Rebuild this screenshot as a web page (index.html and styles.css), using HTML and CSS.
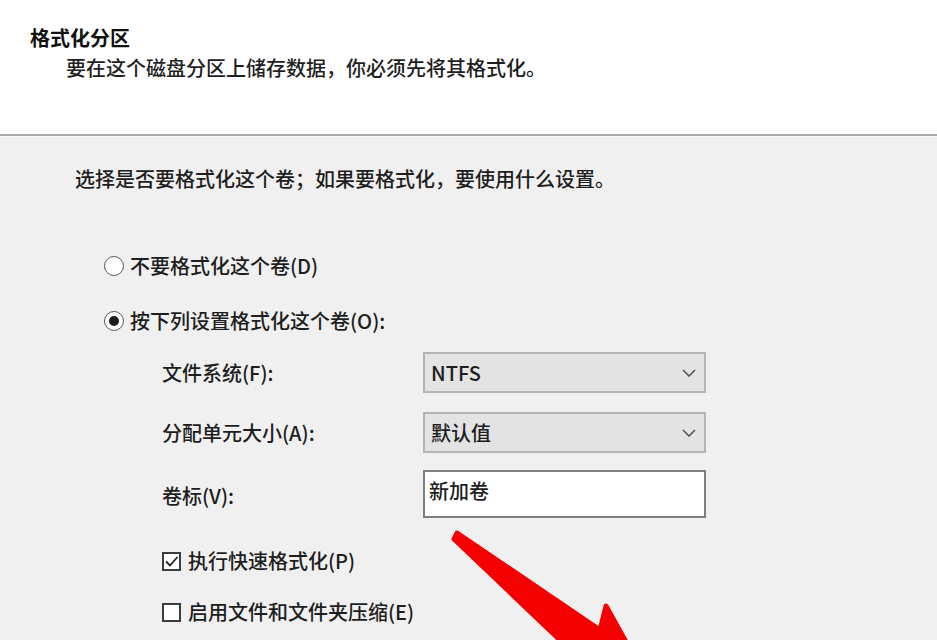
FILE: index.html
```html
<!DOCTYPE html>
<html lang="zh-CN">
<head>
<meta charset="utf-8">
<title>格式化分区</title>
<link rel="stylesheet" href="styles.css">
</head>
<body>
<div class="page">
  <header class="header">
    <div class="title">格式化分区</div>
    <div class="subtitle">要在这个磁盘分区上储存数据，你必须先将其格式化。</div>
  </header>
  <div class="sep"></div>
  <main class="main">
    <p class="intro">选择是否要格式化这个卷；如果要格式化，要使用什么设置。</p>
    <div class="options">
      <div class="radio-row"><span class="radio"></span><span>不要格式化这个卷(D)</span></div>
      <div class="radio-row"><span class="radio checked"></span><span>按下列设置格式化这个卷(O):</span></div>
    </div>
    <div class="form">
      <div class="label">文件系统(F):</div>
      <div class="select"><span>NTFS</span>
        <svg class="chev" width="14" height="8" viewBox="0 0 14 8"><polyline points="1,1 7,7 13,1" fill="none" stroke="#555" stroke-width="1.6"/></svg>
      </div>
      <div class="label">分配单元大小(A):</div>
      <div class="select"><span>默认值</span>
        <svg class="chev" width="14" height="8" viewBox="0 0 14 8"><polyline points="1,1 7,7 13,1" fill="none" stroke="#555" stroke-width="1.6"/></svg>
      </div>
      <div class="label">卷标(V):</div>
      <div class="input">新加卷</div>
    </div>
    <div class="checks">
      <div class="check-row"><span class="box"><svg width="15" height="15" viewBox="0 0 15 15"><polyline points="2,7.5 6,11.5 13.5,3" fill="none" stroke="#222" stroke-width="1.8"/></svg></span><span>执行快速格式化(P)</span></div>
      <div class="check-row"><span class="box"></span><span>启用文件和文件夹压缩(E)</span></div>
    </div>
  </main>
  <svg class="arrow" width="937" height="640" viewBox="0 0 937 640">
    <path d="M457,533 L600,630 L606,606 L626,642 L562,642 L454,539 Z" fill="#f40000" stroke="#f40000" stroke-width="5" stroke-linejoin="round"/>
  </svg>
</div>
</body>
</html>
```

FILE: styles.css
```css
html, body {
  margin: 0;
  padding: 0;
}
body {
  width: 937px;
  height: 640px;
  overflow: hidden;
  background: #f0f0f0;
  font-family: "Noto Sans CJK SC", "Microsoft YaHei", sans-serif;
  font-size: 20px;
  font-weight: 500;
  color: #1e1e1e;
}
.page {
  position: relative;
  width: 937px;
  height: 640px;
  overflow: hidden;
}
.header {
  background: #ffffff;
  height: 134px;
  box-sizing: border-box;
  padding-top: 26px;
}
.title {
  margin-left: 30px;
  font-weight: bold;
  line-height: 24px;
  color: #111;
}
.subtitle {
  margin-left: 66px;
  margin-top: 6px;
  line-height: 24px;
}
.sep {
  height: 2px;
  background: #a8a8a8;
  border-bottom: 1px solid #fbfbfb;
}
.main {
  padding-top: 30px;
}
.intro {
  margin: 0 0 0 75px;
  line-height: 24px;
}
.options {
  margin-left: 104px;
  margin-top: 63px;
  display: flex;
  flex-direction: column;
  gap: 31px;
}
.radio-row {
  display: flex;
  align-items: center;
  gap: 6px;
  line-height: 24px;
}
.radio {
  width: 20px;
  height: 20px;
  box-sizing: border-box;
  border: 1.5px solid #5a5a5a;
  border-radius: 50%;
  background: #fff;
  position: relative;
  flex: none;
}
.radio.checked::after {
  content: "";
  position: absolute;
  left: 3.5px;
  top: 3.5px;
  width: 10px;
  height: 10px;
  border-radius: 50%;
  background: #1c1c1c;
}
.form {
  margin-left: 162px;
  margin-top: 19px;
  display: grid;
  grid-template-columns: 261px 283px;
  grid-template-rows: 41px 41px 48px;
  row-gap: 19px;
  align-items: center;
}
.label {
  line-height: 24px;
}
.select {
  height: 41px;
  box-sizing: border-box;
  border: 2px solid #b4b4b4;
  background: #e3e3e3;
  display: flex;
  align-items: center;
  justify-content: space-between;
  padding: 0 8px 0 6px;
  line-height: 24px;
}
.input {
  height: 48px;
  box-sizing: border-box;
  border: 2px solid #7f7f7f;
  background: #ffffff;
  padding: 7px 4px 0;
  line-height: 24px;
  align-self: start;
  margin-top: -2px;
}
.checks {
  margin-left: 162px;
  margin-top: 29px;
  display: flex;
  flex-direction: column;
  gap: 27px;
}
.check-row {
  display: flex;
  align-items: center;
  gap: 7px;
  line-height: 24px;
}
.box {
  width: 19px;
  height: 19px;
  box-sizing: border-box;
  border: 2px solid #3c3c3c;
  background: #fff;
  display: flex;
  align-items: center;
  justify-content: center;
  flex: none;
}
.arrow {
  position: absolute;
  left: 0;
  top: 0;
  pointer-events: none;
}
```
